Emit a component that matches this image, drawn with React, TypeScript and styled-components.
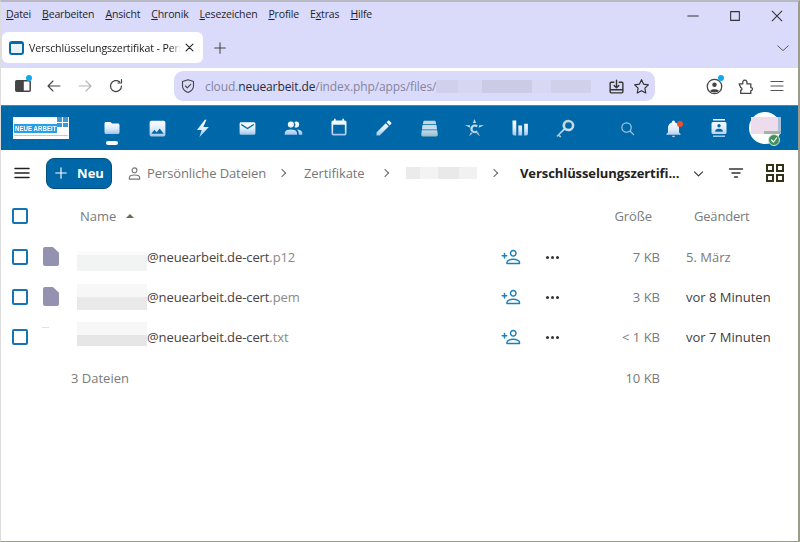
import { useId } from "react";
import styled, { createGlobalStyle } from "styled-components";

const BLUE = "#0068a8";
const LAVENDER = "#dadafb";

const GlobalStyle = createGlobalStyle`
  html, body {
    margin: 0;
    padding: 0;
    background: #fff;
  }
  * {
    box-sizing: border-box;
  }
`;

const paths = {
  folder: "M10,4H4C2.89,4 2,4.89 2,6V18A2,2 0 0,0 4,20H20A2,2 0 0,0 22,18V8C22,6.89 21.1,6 20,6H12L10,4Z",
  image: "M8.5,13.5L11,16.5L14.5,12L19,18H5M21,19V5C21,3.89 20.1,3 19,3H5A2,2 0 0,0 3,5V19A2,2 0 0,0 5,21H19A2,2 0 0,0 21,19Z",
  flash: "M15,1L5,14H11L8,23L20,10H13L17,1Z",
  email: "M20,8L12,13L4,8V6L12,11L20,6M20,4H4C2.89,4 2,4.89 2,6V18A2,2 0 0,0 4,20H20A2,2 0 0,0 22,18V6C22,4.89 21.1,4 20,4Z",
  people: "M16 17V19H2V17S2 13 9 13 16 17 16 17M12.5 7.5A3.5 3.5 0 1 0 9 11A3.5 3.5 0 0 0 12.5 7.5M15.94 13A5.32 5.32 0 0 1 18 17V19H22V17S22 13.37 15.94 13M15 4A3.39 3.39 0 0 0 13.07 4.59A5 5 0 0 1 13.07 10.41A3.39 3.39 0 0 0 15 11A3.5 3.5 0 0 0 15 4Z",
  calendar: "M19,19H5V8H19M16,1V3H8V1H6V3H5C3.89,3 3,3.89 3,5V19A2,2 0 0,0 5,21H19A2,2 0 0,0 21,19V5C21,3.89 20.1,3 19,3H18V1",
  pencil: "M20.71,7.04C21.1,6.65 21.1,6 20.71,5.63L18.37,3.29C18,2.9 17.35,2.9 16.96,3.29L15.12,5.12L18.87,8.87M3,17.25V21H6.75L17.81,9.93L14.06,6.18L3,17.25Z",
  stack: "M6,3H18A1,1 0 0,1 19,4L19.6,7H4.4L5,4A1,1 0 0,1 6,3ZM4,8H20L20.6,13H3.4ZM3.2,14H20.8L21.5,19A2,2 0 0,1 19.5,21H4.5A2,2 0 0,1 2.5,19Z",
  star: "M12,0L14,5H10ZM0,8L6,8L6.8,11ZM24,8L18,8L17.2,11ZM5,22L7.4,16.6L9.4,18.4ZM19,22L16.6,16.6L14.6,18.4ZM16.4,8.6A5.6,5.6 0 1 0 16.4,16.4L14.2,14.6A2.8,2.8 0 1 1 14.2,10.4Z",
  bars: "M3,3H7.5V21H5A2,2 0 0,1 3,19ZM10,9H14.5V21H10ZM17,7H21.5V19A2,2 0 0,1 19.5,21H17Z",
  key: "M15,2A7,7 0 1 1 10.4,14.3L4.5,20.2L6.5,22.2L5,23.7L3,21.7L1.8,22.9L0.4,21.5L9,12.9A7,7 0 0,1 15,2ZM15,5A4,4 0 1 0 15,13A4,4 0 0,0 15,5Z",
  bell: "M21,19V20H3V19L5,17V11C5,7.9 7.03,5.17 10,4.29C10,4.19 10,4.1 10,4A2,2 0 0,1 12,2A2,2 0 0,1 14,4C14,4.1 14,4.19 14,4.29C16.97,5.17 19,7.9 19,11V17L21,19M14,21A2,2 0 0,1 12,23A2,2 0 0,1 10,21",
  contacts: "M20,0H4V2H20V0M4,24H20V22H4V24M20,4H4A2,2 0 0,0 2,6V18A2,2 0 0,0 4,20H20A2,2 0 0,0 22,18V6A2,2 0 0,0 20,4M12,6.75A2.25,2.25 0 0,1 14.25,9A2.25,2.25 0 0,1 12,11.25A2.25,2.25 0 0,1 9.75,9A2.25,2.25 0 0,1 12,6.75M17,17H7V15.5C7,13.83 10.33,13 12,13C13.67,13 17,13.83 17,15.5V17Z",
};

function NavGlyph({ d, size = 20, muted = false }: { d: string; size?: number; muted?: boolean }) {
  const id = useId();
  return (
    <svg width={size} height={size} viewBox="0 0 24 24">
      <defs>
        <linearGradient id={id} x1="0" y1="0" x2="0" y2="1">
          <stop offset="0" stopColor={muted ? "#c2d3cc" : "#ffffff"} />
          <stop offset="0.55" stopColor={muted ? "#c8e0f8" : "#dcebfb"} />
          <stop offset="1" stopColor={muted ? "#9dbdc0" : "#9fc4ec"} />
        </linearGradient>
      </defs>
      <path d={d} fill={`url(#${id})`} />
    </svg>
  );
}

function Line({ d, size = 16, color = "#444", width = 1.4 }: { d: string; size?: number; color?: string; width?: number }) {
  return (
    <svg width={size} height={size} viewBox="0 0 16 16" fill="none" stroke={color} strokeWidth={width} strokeLinecap="round" strokeLinejoin="round">
      <path d={d} />
    </svg>
  );
}

const menuItems: [string, string, string][] = [
  ["", "D", "atei"],
  ["", "B", "earbeiten"],
  ["", "A", "nsicht"],
  ["", "C", "hronik"],
  ["", "L", "esezeichen"],
  ["", "P", "rofile"],
  ["E", "x", "tras"],
  ["", "H", "ilfe"],
];

const appIcons: { d: string; size: number; muted?: boolean }[] = [
  { d: paths.folder, size: 18 },
  { d: paths.image, size: 21 },
  { d: paths.flash, size: 19 },
  { d: paths.email, size: 19 },
  { d: paths.people, size: 21 },
  { d: paths.calendar, size: 20 },
  { d: paths.pencil, size: 20 },
  { d: paths.stack, size: 21, muted: true },
  { d: paths.star, size: 19, muted: true },
  { d: paths.bars, size: 20 },
  { d: paths.key, size: 20, muted: true },
];

const files = [
  { ext: ".p12", size: "7 KB", date: "5. März", recent: false, icon: true, blurTop: "#fbfbfb", blurBottom: "#f2f3f3", blurH: 20, split: 20, shift: 4 },
  { ext: ".pem", size: "3 KB", date: "vor 8 Minuten", recent: true, icon: true, blurTop: "#f7f7f7", blurBottom: "#e9e9e9", blurH: 26, split: 50, shift: 0 },
  { ext: ".txt", size: "< 1 KB", date: "vor 7 Minuten", recent: true, icon: false, blurTop: "#f7f7f7", blurBottom: "#e6e6e6", blurH: 24, split: 55, shift: -3 },
];

export default function App() {
  return (
    <>
      <GlobalStyle />
      <Frame>
        <TitleBar>
          <Menu>
            {menuItems.map(([before, key, after]) => (
              <MenuItem key={key}>
                {before}
                <u>{key}</u>
                {after}
              </MenuItem>
            ))}
          </Menu>
          <WindowButtons>
            <Line size={14} color="#333" width={1.2} d="M2 8H14" />
            <Line size={14} color="#333" width={1.2} d="M3 3H13V13H3Z" />
            <Line size={14} color="#333" width={1.2} d="M2.5 2.5L13.5 13.5M13.5 2.5L2.5 13.5" />
          </WindowButtons>
        </TitleBar>

        <TabStrip>
          <Tab>
            <TabFavicon />
            <TabLabel>Verschlüsselungszertifikat - Pers</TabLabel>
            <Line size={11} color="#222" width={1.6} d="M3 3L13 13M13 3L3 13" />
          </Tab>
          <NewTab>
            <Line size={14} color="#444" width={1.2} d="M8 2V14M2 8H14" />
          </NewTab>
          <TabList>
            <Line size={14} color="#555" width={1.1} d="M2 5.5L8 11L14 5.5" />
          </TabList>
        </TabStrip>

        <Toolbar>
          <ToolButtons>
            <ToolSlot>
              <svg width="16" height="12" viewBox="0 0 16 12">
                <rect x="0.8" y="0.8" width="14.4" height="10.4" rx="1" fill="none" stroke="#444" strokeWidth="1.5" />
                <rect x="0.8" y="0.8" width="8" height="10.4" fill="#444" />
              </svg>
              <Dot />
            </ToolSlot>
            <ToolSlot>
              <Line size={16} color="#444" width={1.1} d="M14 8H2M7 3L2 8L7 13" />
            </ToolSlot>
            <ToolSlot>
              <Line size={16} color="#b4b4b4" width={1.1} d="M2 8H14M9 3L14 8L9 13" />
            </ToolSlot>
            <ToolSlot>
              <Line size={16} color="#444" width={1.2} d="M13.5 8A5.5 5.5 0 1 1 11.5 3.8M13.5 1.5V5H10" />
            </ToolSlot>
          </ToolButtons>
          <UrlBar>
            <Line size={16} color="#444" width={1.1} d="M8 1.8L13.5 3.6V8C13.5 11 11 13.3 8 14.4C5 13.3 2.5 11 2.5 8V3.6ZM5.5 8L7.3 9.8L10.7 6.4" />
            <UrlText>
              cloud.<b>neuearbeit.de</b>/index.php/apps/files/
            </UrlText>
            <UrlBlur />
            <UrlActions>
              <Line size={17} color="#333" width={1.3} d="M2 5V13C2 13.8 2.4 14 3 14H13C13.6 14 14 13.8 14 13V5C14 4.2 13.6 4 13 4H10.5M5.5 4H3C2.4 4 2 4.2 2 5M8 2V9M5.8 7L8 9.3L10.2 7M2 11H14" />
              <Line size={17} color="#333" width={1.1} d="M8 1.6L10 5.8L14.5 6.4L11.2 9.5L12 14.1L8 11.9L4 14.1L4.8 9.5L1.5 6.4L6 5.8Z" />
            </UrlActions>
          </UrlBar>
          <ToolEnd>
            <ToolSlot>
              <svg width="17" height="17" viewBox="0 0 16 16">
                <circle cx="8" cy="8" r="6.8" fill="none" stroke="#444" strokeWidth="1.2" />
                <circle cx="8" cy="6.4" r="2.1" fill="#444" />
                <path d="M3.8 12.2C4.6 10.2 11.4 10.2 12.2 12.2C10.6 14 5.4 14 3.8 12.2Z" fill="#444" />
              </svg>
              <Dot />
            </ToolSlot>
            <ToolSlot>
              <Line size={17} color="#444" width={1.2} d="M2 5.5H5.5C5 3.5 5.8 2 7.4 2C9 2 9.8 3.5 9.3 5.5H13V9C15 8.6 15 12.2 13 11.8V14.5H3.5V11.5C5 11.8 5 8.8 3.5 9Z" />
            </ToolSlot>
            <ToolSlot>
              <Line size={16} color="#555" width={1.2} d="M2 3.5H14M2 8H14M2 12.5H14" />
            </ToolSlot>
          </ToolEnd>
        </Toolbar>

        <NavBar>
          <Logo>
            <LogoTop>
              <LogoWord>
                <span>NEUE ARBEIT</span>
              </LogoWord>
              <LogoCross />
            </LogoTop>
            <LogoTagline />
          </Logo>
          <AppList>
            {appIcons.map((icon, i) => (
              <AppItem key={i} $active={i === 0}>
                <NavGlyph d={icon.d} size={icon.size} muted={icon.muted} />
              </AppItem>
            ))}
          </AppList>
          <NavRight>
            <NavSlot>
              <Line size={15} color="#a9c8df" width={1.3} d="M7 2A5 5 0 1 1 7 12A5 5 0 1 1 7 2ZM10.7 10.7L14.5 14.5" />
            </NavSlot>
            <NavSlot>
              <NavGlyph d={paths.bell} size={19} />
              <BellDot />
            </NavSlot>
            <NavSlot>
              <NavGlyph d={paths.contacts} size={18} />
            </NavSlot>
            <Avatar>
              <AvatarBlur />
              <StatusBadge>
                <Line size={8} color="#fff" width={2.4} d="M3 8L7 12L13 4" />
              </StatusBadge>
            </Avatar>
          </NavRight>
        </NavBar>

        <Breadcrumbs>
          <Burger>
            <Line size={16} color="#222" width={1.5} d="M1 3.5H15M1 8H15M1 12.5H15" />
          </Burger>
          <NewButton>
            <Line size={14} color="#fff" width={1.3} d="M8 2V14M2 8H14" />
            Neu
          </NewButton>
          <Crumb $width={148} $indent={15}>
            <Line size={15} color="#777" width={1.2} d="M8 2A2.6 2.6 0 1 1 8 7.2A2.6 2.6 0 1 1 8 2ZM2.5 14V12.4C2.5 10.4 5.5 9.6 8 9.6C10.5 9.6 13.5 10.4 13.5 12.4V14Z" />
            Persönliche Dateien
          </Crumb>
          <Separator />
          <Crumb $width={74} $indent={14}>Zertifikate</Crumb>
          <Separator />
          <CrumbBlur />
          <Separator />
          <CurrentCrumb>Verschlüsselungszertifi...</CurrentCrumb>
          <CrumbTools>
            <Line size={13} color="#333" width={1.4} d="M3 6L8 11L13 6" />
            <Line size={16} color="#333" width={1.4} d="M1.5 4H14.5M4 8H12M6.5 12H9.5" />
            <GridIcon viewBox="0 0 18 18">
              <rect x="1" y="1" width="6" height="6" />
              <rect x="11" y="1" width="6" height="6" />
              <rect x="1" y="11" width="6" height="6" />
              <rect x="11" y="11" width="6" height="6" />
            </GridIcon>
          </CrumbTools>
        </Breadcrumbs>

        <HeadRow>
          <CheckCell>
            <Checkbox />
          </CheckCell>
          <NameHead>
            Name
            <SortCaret />
          </NameHead>
          <SizeHead>Größe</SizeHead>
          <DateHead>Geändert</DateHead>
        </HeadRow>

        {files.map((file) => (
          <FileRow key={file.ext}>
            <CheckCell>
              <Checkbox />
            </CheckCell>
            <IconCell>{file.icon ? <FileIcon /> : <FileStub />}</IconCell>
            <NameCell>
              <NameBlur $top={file.blurTop} $bottom={file.blurBottom} $height={file.blurH} $split={file.split} $shift={file.shift} />
              <span>@neuearbeit.de-cert</span>
              <Ext>{file.ext}</Ext>
            </NameCell>
            <ActionCell>
              <Line size={20} color="#1f7fb8" width={1.2} d="M9.8 2.8A2.2 2.2 0 1 1 9.8 7.2A2.2 2.2 0 1 1 9.8 2.8ZM4.8 13.2V12.4C4.8 10.8 7.4 9.8 9.8 9.8C12.2 9.8 14.8 10.8 14.8 12.4V13.2ZM1 7H4.6M2.8 5.2V8.8" />
            </ActionCell>
            <ActionCell>
              <Dots />
            </ActionCell>
            <SizeCell>{file.size}</SizeCell>
            <DateCell $recent={file.recent}>{file.date}</DateCell>
          </FileRow>
        ))}

        <SummaryRow>
          <SummaryName>3 Dateien</SummaryName>
          <SizeCell>10 KB</SizeCell>
        </SummaryRow>
      </Frame>
    </>
  );
}

const Frame = styled.div`
  width: 800px;
  height: 542px;
  overflow: hidden;
  display: flex;
  flex-direction: column;
  border-top: 2px solid #b9b9c4;
  border-left: 1px solid #dcdcdc;
  border-right: 2px solid #9c9c8c;
  border-bottom: 1px solid #9c9c8c;
  background: #fff;
  font-family: "Open Sans", "Noto Sans", sans-serif;
`;

const TitleBar = styled.div`
  flex: none;
  height: 28px;
  display: flex;
  align-items: center;
  justify-content: space-between;
  background: ${LAVENDER};
`;

const Menu = styled.div`
  display: flex;
  padding: 0 0 4px 5px;
  gap: 11px;
  font-size: 10.5px;
  color: #1e1e2a;
`;

const MenuItem = styled.span`
  letter-spacing: -0.15px;

  u {
    text-underline-offset: 1px;
  }
`;

const WindowButtons = styled.div`
  display: flex;
  gap: 28px;
  padding-right: 14px;
`;

const TabStrip = styled.div`
  flex: none;
  height: 38px;
  display: flex;
  align-items: flex-start;
  padding: 2px 0 0 1px;
  background: ${LAVENDER};
`;

const Tab = styled.div`
  width: 201px;
  height: 31px;
  display: flex;
  align-items: center;
  padding: 0 8px 0 7px;
  gap: 5px;
  background: #fff;
  border-radius: 6px;
`;

const TabFavicon = styled.span`
  flex: none;
  width: 15px;
  height: 14px;
  border: 2px solid #0a68a4;
  border-top-width: 3px;
  border-radius: 3px;
  background: #eaf2f8;
`;

const TabLabel = styled.span`
  flex: 1;
  min-width: 0;
  margin-right: -2px;
  white-space: nowrap;
  font-size: 10.6px;
  letter-spacing: -0.12px;
  color: #222;
  mask-image: linear-gradient(to right, #000 93%, transparent);
`;

const NewTab = styled.div`
  width: 34px;
  height: 31px;
  display: flex;
  align-items: center;
  justify-content: center;
`;

const TabList = styled.div`
  margin-left: auto;
  height: 31px;
  padding-right: 8px;
  display: flex;
  align-items: center;
`;

const Toolbar = styled.div`
  flex: none;
  height: 37px;
  display: flex;
  align-items: center;
  padding-bottom: 1px;
  background: #fff;
`;

const ToolButtons = styled.div`
  width: 173px;
  padding-left: 6px;
  display: flex;
`;

const ToolSlot = styled.div`
  position: relative;
  width: 31px;
  height: 24px;
  display: flex;
  align-items: center;
  justify-content: center;
`;

const Dot = styled.span`
  position: absolute;
  top: 1px;
  right: 6px;
  width: 6px;
  height: 6px;
  border-radius: 50%;
  background: #12a8f0;
`;

const UrlBar = styled.div`
  width: 481px;
  height: 30px;
  display: flex;
  align-items: center;
  padding: 0 5px 0 6px;
  background: ${LAVENDER};
  border-radius: 9px;
`;

const UrlText = styled.span`
  margin-left: 9px;
  padding-top: 1px;
  font-size: 12px;
  letter-spacing: -0.1px;
  color: #85859a;
  white-space: nowrap;

  b {
    font-weight: 400;
    color: #2a2a3a;
  }
`;

const UrlBlur = styled.span`
  width: 155px;
  height: 13px;
  background: linear-gradient(
    to right,
    #d0d0ec 0 14%,
    #d6d6f2 14% 30%,
    #cbcbe6 30% 62%,
    #d8d8f4 62% 74%,
    #d0d0ea 74% 100%
  );
`;

const UrlActions = styled.div`
  margin-left: auto;
  display: flex;
  gap: 8px;
`;

const ToolEnd = styled.div`
  display: flex;
  margin-left: 44px;
`;

const NavBar = styled.div`
  flex: none;
  height: 45px;
  display: flex;
  align-items: center;
  padding: 0 17px 0 12px;
  background: ${BLUE};
  border-top: 1px solid #3f8dbf;
`;

const Logo = styled.div`
  width: 56px;
  height: 22px;
  display: flex;
  flex-direction: column;
  background: #fff;
  padding: 0 1px;
`;

const LogoTop = styled.div`
  height: 16px;
  display: flex;
  align-items: flex-end;
  justify-content: space-between;
`;

const LogoWord = styled.div`
  width: 43px;
  height: 9px;
  background: #27a0ea;
  color: #fff;
  font-family: "Liberation Sans", sans-serif;
  font-weight: 700;
  font-size: 7.5px;
  line-height: 9px;
  padding-left: 1px;
  white-space: nowrap;

  span {
    display: inline-block;
    transform: scaleX(0.82);
    transform-origin: left center;
  }
`;

const LogoCross = styled.span`
  align-self: flex-start;
  width: 11px;
  height: 10px;
  background:
    linear-gradient(#fff, #fff) center / 1px 100% no-repeat,
    linear-gradient(#fff, #fff) center / 100% 1px no-repeat,
    #3a9ad8;
`;

const LogoTagline = styled.span`
  margin-top: 2px;
  height: 1px;
  background: #a9cfe9;
`;

const AppList = styled.div`
  margin-left: 20px;
  display: flex;
`;

const AppItem = styled.div<{ $active: boolean }>`
  position: relative;
  width: 45.4px;
  height: 44px;
  display: flex;
  align-items: center;
  justify-content: center;

  &::after {
    content: "";
    display: ${({ $active }) => ($active ? "block" : "none")};
    position: absolute;
    bottom: 5px;
    left: 17px;
    width: 12px;
    height: 4px;
    border-radius: 2px;
    background: #fff;
  }
`;

const NavRight = styled.div`
  margin-left: auto;
  display: flex;
  align-items: center;
`;

const NavSlot = styled.div`
  position: relative;
  width: 46px;
  height: 44px;
  display: flex;
  align-items: center;
  justify-content: center;
`;

const BellDot = styled.span`
  position: absolute;
  top: 15px;
  right: 13px;
  width: 6px;
  height: 6px;
  border-radius: 50%;
  background: #e9522c;
`;

const Avatar = styled.div`
  position: relative;
  margin-left: 7px;
  width: 32px;
  height: 32px;
  border-radius: 50%;
  background: #fff;
`;

const AvatarBlur = styled.span`
  position: absolute;
  top: 5px;
  left: 2px;
  width: 30px;
  height: 17px;
  background:
    linear-gradient(#9fb5a8, #9fb5a8) right bottom / 17px 3px no-repeat,
    linear-gradient(#a9bedb, #a9bedb) right top / 3px 14px no-repeat,
    #ecdcec;
`;

const StatusBadge = styled.span`
  position: absolute;
  right: 1px;
  bottom: -2px;
  width: 12px;
  height: 12px;
  display: flex;
  align-items: center;
  justify-content: center;
  border-radius: 50%;
  background: #41905a;
  border: 1px solid #cfe6d6;
`;

const Breadcrumbs = styled.div`
  flex: none;
  height: 46px;
  display: flex;
  align-items: center;
  color: #777;
  font-size: 13px;
`;

const Burger = styled.div`
  width: 45px;
  padding-left: 13px;
  display: flex;
`;

const NewButton = styled.div`
  width: 66px;
  height: 31px;
  display: flex;
  align-items: center;
  justify-content: center;
  gap: 9px;
  background: ${BLUE};
  border: 1px solid #00507f;
  border-radius: 8px;
  color: #fff;
  font-size: 13px;
  font-weight: 700;
`;

const Crumb = styled.div<{ $width: number; $indent: number }>`
  width: ${({ $width }) => $width}px;
  margin-left: ${({ $indent }) => $indent}px;
  display: flex;
  align-items: center;
  gap: 5px;
  letter-spacing: -0.1px;
  white-space: nowrap;
`;

const Separator = styled.span`
  flex: none;
  width: 6px;
  height: 6px;
  margin: 0 5px 0 4px;
  border-top: 1.3px solid #666;
  border-right: 1.3px solid #666;
  transform: rotate(45deg);
`;

const CrumbBlur = styled.span`
  flex: none;
  margin: 0 10px 0 13px;
  width: 71px;
  height: 12px;
  background: linear-gradient(to right, #ebebeb 0 20%, #f3f3f3 20% 45%, #e9e9e9 45% 75%, #f1f1f1 75%);
`;

const CurrentCrumb = styled.div`
  margin-left: 18px;
  width: 160px;
  font-weight: 700;
  letter-spacing: -0.08px;
  color: #222;
  white-space: nowrap;
`;

const CrumbTools = styled.div`
  margin-left: 12px;
  display: flex;
  align-items: center;
  gap: 22.5px;
`;

const GridIcon = styled.svg`
  width: 18px;
  height: 18px;
  fill: none;
  stroke: #333318;
  stroke-width: 2;
`;

const rowColumns = "38px 38px 413px 42px 40px 88px 26px 112px";

const HeadRow = styled.div`
  flex: none;
  height: 41px;
  padding-bottom: 2px;
  display: grid;
  grid-template-columns: 38px 1fr 88px 146px;
  align-items: center;
  font-size: 13px;
  color: #7a7a7a;
`;

const NameHead = styled.div`
  padding-left: 41px;
  display: flex;
  align-items: center;
  gap: 10px;
`;

const SortCaret = styled.span`
  width: 0;
  height: 0;
  border-left: 4.5px solid transparent;
  border-right: 4.5px solid transparent;
  border-bottom: 4.5px solid #6b6b5c;
`;

const SizeHead = styled.div`
  text-align: right;
  letter-spacing: -0.1px;
`;

const DateHead = styled.div`
  padding-left: 42px;
  letter-spacing: -0.2px;
`;

const FileRow = styled.div`
  flex: none;
  height: 40px;
  display: grid;
  grid-template-columns: ${rowColumns};
  align-items: center;
  font-size: 13px;
  color: #777;
`;

const CheckCell = styled.div`
  display: flex;
  justify-content: center;
`;

const Checkbox = styled.span`
  width: 16px;
  height: 16px;
  border: 2px solid #1474b4;
  border-radius: 2px;
`;

const IconCell = styled.div`
  position: relative;
  height: 20px;
  padding-left: 4px;
`;

const FileIcon = styled.span`
  display: block;
  width: 16px;
  height: 19px;
  background: #9392b0;
  border-radius: 2px;
  clip-path: polygon(0 0, 62% 0, 100% 30%, 100% 100%, 0 100%);
`;

const FileStub = styled.span`
  position: absolute;
  left: 3px;
  top: 0;
  width: 7px;
  height: 1px;
  background: #e4e4d8;
`;

const NameCell = styled.div`
  display: flex;
  align-items: center;
  letter-spacing: -0.1px;
  color: #444;
`;

const NameBlur = styled.span<{ $top: string; $bottom: string; $height: number; $split: number; $shift: number }>`
  flex: none;
  width: 70px;
  height: ${({ $height }) => $height}px;
  margin-top: ${({ $shift }) => $shift * 2}px;
  background: linear-gradient(
    ${({ $top }) => $top} ${({ $split }) => $split}%,
    ${({ $bottom }) => $bottom} ${({ $split }) => $split}%
  );
`;

const Ext = styled.span`
  color: #8a8a8a;
`;

const ActionCell = styled.div`
  display: flex;
  justify-content: center;
`;

const Dots = styled.span`
  width: 3px;
  height: 3px;
  border-radius: 50%;
  background: #333;
  box-shadow: 5px 0 0 #333, -5px 0 0 #333;
`;

const SizeCell = styled.div`
  text-align: right;
  color: #7a7a7a;
`;

const DateCell = styled.div<{ $recent: boolean }>`
  grid-column: 8;
  color: ${({ $recent }) => ($recent ? "#3e3e3e" : "#7a7a7a")};
  white-space: nowrap;
`;

const SummaryRow = styled.div`
  flex: none;
  height: 42px;
  display: grid;
  grid-template-columns: ${rowColumns};
  align-items: center;
  font-size: 13px;
  color: #7a7a7a;

  ${SizeCell} {
    grid-column: 6;
  }
`;

const SummaryName = styled.div`
  grid-column: 1 / 4;
  padding-left: 70px;
`;
